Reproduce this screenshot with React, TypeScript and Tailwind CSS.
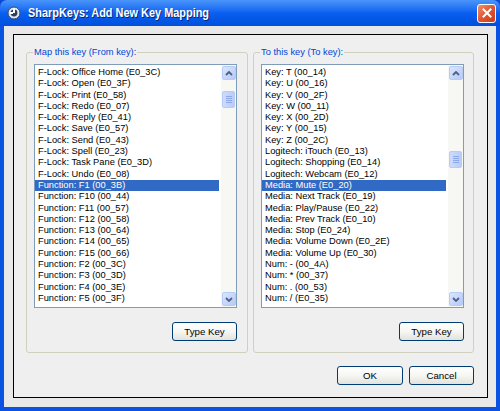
import React from 'react'

const FROM_KEYS = [
  'F-Lock: Office Home (E0_3C)',
  'F-Lock: Open (E0_3F)',
  'F-Lock: Print (E0_58)',
  'F-Lock: Redo (E0_07)',
  'F-Lock: Reply (E0_41)',
  'F-Lock: Save (E0_57)',
  'F-Lock: Send (E0_43)',
  'F-Lock: Spell (E0_23)',
  'F-Lock: Task Pane (E0_3D)',
  'F-Lock: Undo (E0_08)',
  'Function: F1 (00_3B)',
  'Function: F10 (00_44)',
  'Function: F11 (00_57)',
  'Function: F12 (00_58)',
  'Function: F13 (00_64)',
  'Function: F14 (00_65)',
  'Function: F15 (00_66)',
  'Function: F2 (00_3C)',
  'Function: F3 (00_3D)',
  'Function: F4 (00_3E)',
  'Function: F5 (00_3F)',
]

const TO_KEYS = [
  'Key: T (00_14)',
  'Key: U (00_16)',
  'Key: V (00_2F)',
  'Key: W (00_11)',
  'Key: X (00_2D)',
  'Key: Y (00_15)',
  'Key: Z (00_2C)',
  'Logitech: iTouch (E0_13)',
  'Logitech: Shopping (E0_14)',
  'Logitech: Webcam (E0_12)',
  'Media: Mute (E0_20)',
  'Media: Next Track (E0_19)',
  'Media: Play/Pause (E0_22)',
  'Media: Prev Track (E0_10)',
  'Media: Stop (E0_24)',
  'Media: Volume Down (E0_2E)',
  'Media: Volume Up (E0_30)',
  'Num: - (00_4A)',
  'Num: * (00_37)',
  'Num: . (00_53)',
  'Num: / (E0_35)',
]

function Arrow({ down }: { down?: boolean }) {
  return (
    <svg width="8" height="5" viewBox="0 0 8 5">
      <polyline
        points={down ? '1,1 4,4 7,1' : '1,4 4,1 7,4'}
        fill="none"
        stroke="#4d6185"
        strokeWidth="1.8"
      />
    </svg>
  )
}

function ScrollBtn({ down }: { down?: boolean }) {
  return (
    <div className="w-[14px] h-[14px] rounded-[2px] border border-[#b8cbf6] bg-gradient-to-br from-[#dbe6fe] to-[#b5c9f8] flex items-center justify-center">
      <Arrow down={down} />
    </div>
  )
}

function ListBox({ items, selected, thumbTop }: { items: string[]; selected: number; thumbTop: number }) {
  return (
    <div className="w-[203px] h-[244px] border border-[#7f9db9] bg-white flex text-[9.3px]">
      <div className="flex-1 pt-[2px] pr-[2px] overflow-hidden">
        {items.map((t, i) => (
          <div
            key={t}
            className={`h-[11.3px] leading-[11.3px] pl-[3px] whitespace-nowrap ${i === selected ? 'bg-[#316ac5] text-white' : 'text-black'}`}
          >
            {t}
          </div>
        ))}
      </div>
      <div className="w-[15px] bg-[#f7f7f4] flex flex-col items-center py-[1px]">
        <ScrollBtn />
        <div className="flex-1 w-full flex flex-col items-center">
          <div
            className="w-[13px] h-[17px] rounded-[2px] border border-[#b8cbf6] bg-gradient-to-r from-[#cddbfd] to-[#b8ccf9] flex flex-col items-center justify-center gap-[1px]"
            style={{ marginTop: thumbTop }}
          >
            <div className="w-[6px] h-px bg-[#8fa8e8]" />
            <div className="w-[6px] h-px bg-[#8fa8e8]" />
            <div className="w-[6px] h-px bg-[#8fa8e8]" />
            <div className="w-[6px] h-px bg-[#8fa8e8]" />
          </div>
        </div>
        <ScrollBtn down />
      </div>
    </div>
  )
}

function XpButton({ children, w }: { children: React.ReactNode; w: string }) {
  return (
    <button
      type="button"
      className={`${w} h-[19px] rounded-[3px] border border-[#003c74] bg-gradient-to-b from-white via-[#f6f6f3] to-[#e3e2dc] text-[9.7px] text-black leading-none`}
    >
      {children}
    </button>
  )
}

function Group({ label, items, selected, thumbTop, w }: { label: string; items: string[]; selected: number; thumbTop: number; w: string }) {
  return (
    <fieldset className={`${w} border border-[#d0d0bf] rounded-[3px] pl-[7px] pb-[11px] flex flex-col`}>
      <legend className="px-[1px] -ml-[1px] text-[#0046d5] text-[9.3px] leading-[12px]">{label}</legend>
      <div className="mt-[6px]">
        <ListBox items={items} selected={selected} thumbTop={thumbTop} />
      </div>
      <div className="mt-[14px] flex justify-end w-[203px]">
        <XpButton w="w-[65px]">Type Key</XpButton>
      </div>
    </fieldset>
  )
}

export default function App() {
  return (
    <div className="w-[500px] h-[411px] flex flex-col bg-[#0a48d8] font-['Liberation_Sans',Arial,sans-serif]">
      <div className="h-[27px] rounded-t-[7px] bg-gradient-to-b from-[#4a95fb] via-[#0a5ff0] to-[#0050dc] flex items-center pl-[7px] pr-[4px]">
        <svg width="14" height="14" viewBox="0 0 14 14" className="shrink-0">
          <circle cx="7" cy="7" r="6" fill="#dfe6ee" stroke="#3a4b6a" strokeWidth="1" />
          <circle cx="7" cy="7" r="3.4" fill="#2e3f5e" />
          <rect x="6" y="2" width="2" height="5" fill="#fff" />
          <rect x="3" y="6" width="3" height="2" fill="#fff" />
        </svg>
        <span className="ml-[7px] text-white font-bold text-[13px] origin-left scale-x-[0.84] whitespace-nowrap [text-shadow:1px_1px_#0a246a]">
          SharpKeys: Add New Key Mapping
        </span>
        <div className="ml-auto w-[19px] h-[19px] rounded-[3px] border border-white bg-gradient-to-br from-[#f09070] via-[#e0552f] to-[#c83e1c] flex items-center justify-center">
          <svg width="10" height="10" viewBox="0 0 10 10">
            <path d="M1.5 1.5 L8.5 8.5 M8.5 1.5 L1.5 8.5" stroke="#fff" strokeWidth="2" strokeLinecap="square" />
          </svg>
        </div>
      </div>
      <div className="flex-1 border-x-4 border-b-4 border-[#0a53e2] bg-[#e8e8e8] pt-[8px] pl-[9px] pr-[8px] pb-[9px] flex">
        <div className="flex-1 border border-black bg-[#efefef] pt-[11px] pl-[12px] pr-[13px] pb-[12px] flex flex-col">
          <div className="flex gap-[5px]">
            <Group label="Map this key (From key):" items={FROM_KEYS} selected={10} thumbTop={11} w="w-[222px]" />
            <Group label="To this key (To key):" items={TO_KEYS} selected={10} thumbTop={71} w="w-[221px]" />
          </div>
          <div className="mt-[13px] flex justify-end gap-[6px]">
            <XpButton w="w-[66px]">OK</XpButton>
            <XpButton w="w-[65px]">Cancel</XpButton>
          </div>
        </div>
      </div>
    </div>
  )
}
